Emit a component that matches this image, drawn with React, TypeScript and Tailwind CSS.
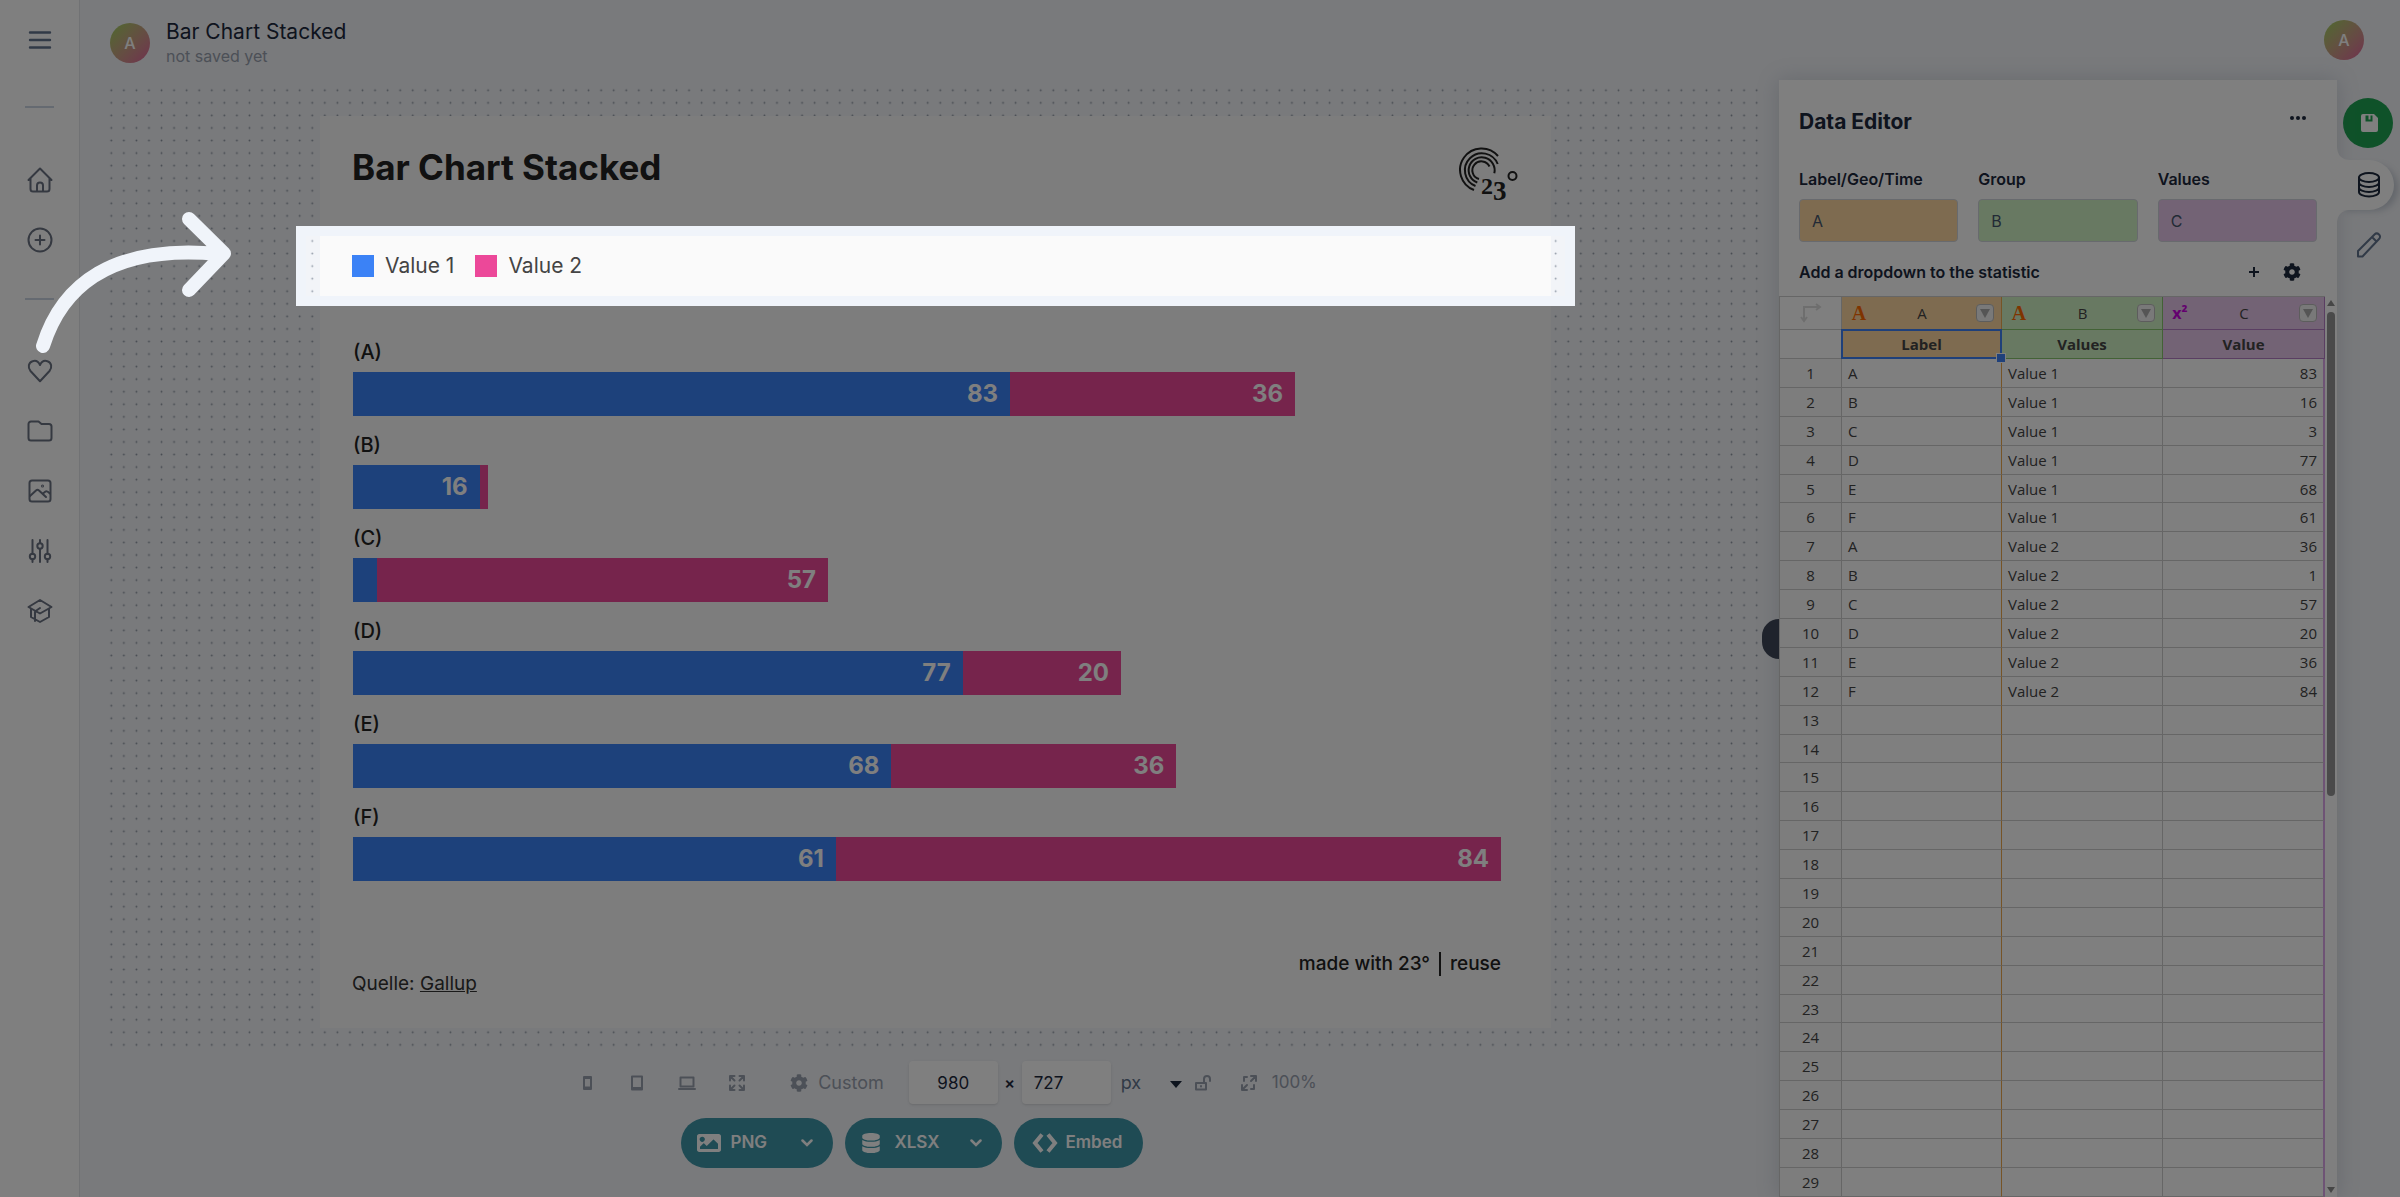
import { useState } from "react";
import type { ReactNode } from "react";
import { FaCog, FaDatabase, FaImage } from "react-icons/fa";

const series = [
  { name: "Value 1", fill: "bg-[#3b82f6]" },
  { name: "Value 2", fill: "bg-[#ec4899]" },
];

const bars = [
  { label: "A", values: [83, 36] },
  { label: "B", values: [16, 1] },
  { label: "C", values: [3, 57] },
  { label: "D", values: [77, 20] },
  { label: "E", values: [68, 36] },
  { label: "F", values: [61, 84] },
];

const rows = series.flatMap((s, i) =>
  bars.map((bar) => [bar.label, s.name, String(bar.values[i])])
);

const ROW_COUNT = 29;
const maxTotal = Math.max(...bars.map((b) => b.values[0] + b.values[1]));

export default function App() {
  return (
    <div className="relative flex h-screen overflow-hidden bg-[#f2f4f8] font-[Inter,sans-serif] text-slate-800">
      <Sidebar />
      <div className="flex min-w-0 flex-1 flex-col">
        <Header />
        <div className="flex min-h-0 flex-1">
          <main className="min-w-0 flex-1 pt-1">
            <Canvas />
            <Toolbar />
            <Downloads />
          </main>
          <DataEditor />
          <Rail />
        </div>
      </div>
      <PointerArrow />
    </div>
  );
}

function Icon({ children, size = 26 }: { children: ReactNode; size?: number }) {
  return (
    <svg
      width={size}
      height={size}
      viewBox="0 0 26 26"
      fill="none"
      stroke="currentColor"
      strokeWidth="2"
      strokeLinecap="round"
      strokeLinejoin="round"
      aria-hidden="true"
    >
      {children}
    </svg>
  );
}

function NavLink({ label, children }: { label: string; children: ReactNode }) {
  return (
    <a href="#" aria-label={label} className="flex h-[60px] items-center">
      <Icon>{children}</Icon>
    </a>
  );
}

function Sidebar() {
  return (
    <nav className="flex w-20 shrink-0 flex-col items-center border-r border-[#e3e5e9] bg-white text-gray-500">
      <button aria-label="Menu" className="flex h-20 items-center text-slate-500">
        <Icon>
          <path d="M3 5.5h20M3 13h20M3 20.5h20" strokeWidth="2.4" />
        </Icon>
      </button>
      <hr className="mt-[26px] w-[29px] border-t-2 border-slate-300" />
      <div className="mt-[42px]">
        <NavLink label="Home">
          <path d="M1.5 13 13 1.500 24.500 13M3.500 11.500V22a2.500 2.500 0 0 0 2.500 2.500h14a2.500 2.500 0 0 0 2.500-2.500V11.500M10 24v-5.500a3 3 0 0 1 6 0V24" />
        </NavLink>
        <NavLink label="Create">
          <circle cx="13" cy="13" r="11.500" />
          <path d="M13 8.500v9M8.500 13h9" />
        </NavLink>
      </div>
      <hr className="mt-7 w-[29px] border-t-2 border-slate-300" />
      <div className="mt-[41px]">
        <NavLink label="Favorites">
          <path d="M13 7C11 2.500 7.500 2.500 5.500 3.200 1.500 4.500.5 9.500 3.500 13L13 23.200 22.500 13c3-3.500 2-8.500-2-9.800C18.500 2.500 15 2.500 13 7Z" />
        </NavLink>
        <NavLink label="Folders">
          <path d="M1.500 6A2.500 2.500 0 0 1 4 3.500h7.500l3 2.500H22a2.500 2.500 0 0 1 2.500 2.500V20a2.500 2.500 0 0 1-2.500 2.500H4A2.500 2.500 0 0 1 1.500 20Z" />
        </NavLink>
        <NavLink label="Images">
          <rect x="2.500" y="2.500" width="21" height="21" rx="2.500" />
          <path d="m3 18 6-5.500c1-.9 2-.9 3 0l7 6.500M16 15.500l2.500-2c1-.8 2-.6 4.500 2" />
          <circle cx="15.500" cy="8" r=".5" />
        </NavLink>
        <NavLink label="Settings">
          <path d="M5.500 2v14M5.500 21v3M13 2v3M13 11v13M20.500 2v14M20.500 21v3" />
          <circle cx="5.500" cy="18.500" r="2.700" />
          <circle cx="13" cy="8" r="2.700" />
          <circle cx="20.500" cy="18.500" r="2.700" />
        </NavLink>
        <NavLink label="Academy">
          <path d="M13 2 1.500 9 13 15.500 24.500 9ZM4 11v8l9 5 9-5v-8M8 23v-9.500l5-3.500" />
        </NavLink>
      </div>
    </nav>
  );
}

function Avatar() {
  return (
    <span className="flex size-10 items-center justify-center rounded-full bg-linear-135 from-[#9bd25a] to-[#e0609c] text-base font-medium text-white">
      A
    </span>
  );
}

function Header() {
  return (
    <header className="flex h-20 shrink-0 items-center justify-between pr-9 pl-[30px]">
      <div className="flex items-center gap-4 pt-1.5">
        <Avatar />
        <div className="pt-0.5">
          <h1 className="text-[21px] leading-6">Bar Chart Stacked</h1>
          <p className="text-base leading-6 text-gray-400">not saved yet</p>
        </div>
      </div>
      <Avatar />
    </header>
  );
}

function Logo() {
  return (
    <svg width="62" height="60" viewBox="0 0 62 60" className="text-[#222]" fill="none" stroke="currentColor" strokeWidth="2" role="img" aria-label="23 degrees">
      <path d="M39 10A21.500 21.500 0 1 0 15 44" />
      <path d="M38.700 18A17 17 0 1 0 16.500 40" />
      <path d="M35.300 27.300A13 13 0 1 0 18.300 36.500" />
      <path d="M30.500 20.500A9 9 0 1 0 20 33" />
      <circle cx="53.500" cy="30" r="4" />
      <text x="22" y="48" fontSize="24" fontWeight="bold" fontFamily="Liberation Serif, serif" fill="currentColor" stroke="none">
        2
      </text>
      <text x="34" y="54" fontSize="27" fontWeight="bold" fontFamily="Liberation Serif, serif" fill="currentColor" stroke="none">
        3
      </text>
    </svg>
  );
}

function Canvas() {
  return (
    <div className="relative mr-3 ml-6 px-6 pt-8 pb-[25px]">
      <svg className="absolute inset-0 size-full" aria-hidden="true">
        <pattern id="dots" x="1" width="12.56" height="12.56" patternUnits="userSpaceOnUse">
          <circle cx="6.300" cy="6.300" r=".9" fill="#8d96a3" />
        </pattern>
        <rect width="100%" height="100%" fill="url(#dots)" />
      </svg>
      <article className="relative mx-auto w-full max-w-[1231px] bg-[#fafafa] pb-[30px] text-[#222]">
        <div className="flex h-[110px] justify-between pt-[30px] pr-[30px] pl-8">
          <h2 className="text-[35px] leading-[42px] font-bold">Bar Chart Stacked</h2>
          <Logo />
        </div>

        <div className="relative flex h-20 items-center pl-8 text-[21px] text-[#444]">
          {series.map((s) => (
            <div key={s.name} className="mr-[21px] flex items-center gap-[11px]">
              <span className={`size-[22px] ${s.fill}`} />
              {s.name}
            </div>
          ))}
          {/* spotlight: dims everything outside the legend */}
          <div className="pointer-events-none absolute inset-y-0 -right-6 -left-6 z-50 border-10 border-[#f0f4fa] shadow-[0_0_0_3000px_rgba(0,0,0,0.5)]" />
        </div>

        <div className="pt-[17px] pr-[50px] pl-[33px]">
          {bars.map((bar) => (
            <StackedBar key={bar.label} label={bar.label} values={bar.values} />
          ))}
        </div>

        <footer className="flex justify-between pt-[69px] pr-[50px] pl-8">
          <p className="pt-5 text-[19px] leading-7 text-[#333]">
            Quelle:{" "}
            <a href="#" className="underline">
              Gallup
            </a>
          </p>
          <p className="flex h-7 items-center gap-[9px] text-[19px] font-medium">
            made with 23° <span className="h-6 w-0.5 bg-[#222]" />
            <a href="#">reuse</a>
          </p>
        </footer>
      </article>
    </div>
  );
}

function StackedBar({ label, values }: { label: string; values: number[] }) {
  return (
    <div>
      <div className="flex h-[49px] items-end pb-1.5 text-xl leading-7 font-medium">
        ({label})
      </div>
      <div className="flex h-11">
        {values.map((value, i) => (
          <div
            key={series[i].name}
            className={`flex items-center justify-end overflow-hidden ${series[i].fill}`}
            style={{ width: `${(value / maxTotal) * 100}%` }}
          >
            {value > 5 && (
              <span className="pr-3 text-2xl font-bold text-white">{value}</span>
            )}
          </div>
        ))}
      </div>
    </div>
  );
}

function Toolbar() {
  const [width, setWidth] = useState("980");
  const [height, setHeight] = useState("727");

  return (
    <div className="flex h-[59px] items-center justify-center pt-2 pb-2 pl-8 text-lg text-gray-400">
      <div className="flex gap-6">
        <button aria-label="Phone">
          <Icon>
            <path d="M10 7h7v12h-7zM10 17.500h7M10 8h7" />
          </Icon>
        </button>
        <button aria-label="Tablet">
          <Icon>
            <path d="M8 6.500h10v13H8zM8 18h10" />
          </Icon>
        </button>
        <button aria-label="Laptop">
          <Icon>
            <path d="M6.500 7.500h13v9h-13zM5 19h16" />
          </Icon>
        </button>
        <button aria-label="Full screen">
          <Icon>
            <path d="M6 10.500V6h4.500M6 6l4.500 4.500M15.500 6H20v4.500M20 6l-4.500 4.500M6 15.500V20h4.500M6 20l4.500-4.500M15.500 20H20v-4.500M20 20l-4.500-4.500" />
          </Icon>
        </button>
      </div>
      <button className="ml-10 flex items-center gap-2.5">
        <FaCog className="size-[18px]" />
        Custom
      </button>
      <input
        aria-label="Width"
        value={width}
        onChange={(e) => setWidth(e.target.value)}
        className="ml-[25px] h-[43px] w-[89px] rounded-sm bg-white text-center text-[17px] text-slate-800 shadow-sm"
      />
      <span className="w-6 text-center text-base font-semibold text-slate-800">×</span>
      <input
        aria-label="Height"
        value={height}
        onChange={(e) => setHeight(e.target.value)}
        className="h-[43px] w-[89px] rounded-sm bg-white pl-3 text-[17px] text-slate-800 shadow-sm"
      />
      <div className="relative ml-2.5">
        <select aria-label="Unit" className="w-[61px] appearance-none text-slate-500">
          <option>px</option>
        </select>
        <svg width="12" height="7" className="pointer-events-none absolute top-3 right-0 text-slate-800" aria-hidden="true">
          <path d="M0 0h12L6 7z" fill="currentColor" />
        </svg>
      </div>
      <button aria-label="Unlock ratio" className="ml-2">
        <Icon>
          <path d="M6 13h10v6.500H6zM14 13V9a3 3 0 0 1 6 0v2M11 16v.5" />
        </Icon>
      </button>
      <button aria-label="Zoom" className="ml-5 flex items-center gap-2.5">
        <Icon>
          <path d="M15 6h5v5M20 6l-5 5M11 20H6v-5M6 20l5-5M8 11V7h3M18 15v4h-3" />
        </Icon>
        <span className="text-[17px]">100%</span>
      </button>
    </div>
  );
}

function Chevron() {
  return (
    <svg width="12" height="8" viewBox="0 0 12 8" fill="none" stroke="currentColor" strokeWidth="2.500" strokeLinecap="round" aria-hidden="true">
      <path d="M1.500 1.500 6 6l4.500-4.500" />
    </svg>
  );
}

function Downloads() {
  return (
    <div className="mt-1.5 flex justify-center gap-3 pr-9 text-[17px] font-semibold text-white">
      <button className="flex h-[50px] w-[152px] items-center rounded-full bg-[#3e96a8] px-4">
        <FaImage className="size-6" />
        <span className="ml-2.5 flex-1 text-left">PNG</span>
        <span className="pr-1">
          <Chevron />
        </span>
      </button>
      <button className="flex h-[50px] w-[157px] items-center rounded-full bg-[#3e96a8] px-4">
        <FaDatabase className="size-5" />
        <span className="ml-3.5 flex-1 text-left">XLSX</span>
        <span className="pr-1">
          <Chevron />
        </span>
      </button>
      <button className="flex h-[50px] w-[129px] items-center gap-2 rounded-full bg-[#3e96a8] pl-[18px]">
        <svg width="26" height="20" viewBox="0 0 26 20" fill="none" stroke="currentColor" strokeWidth="4" aria-hidden="true">
          <path d="m10 1.500-7 8.500 7 8.500M16 1.500l7 8.500-7 8.500" />
        </svg>
        Embed
      </button>
    </div>
  );
}

const fields = [
  { id: "label", title: "Label/Geo/Time", value: "A", fill: "bg-[#fcd7a1]" },
  { id: "group", title: "Group", value: "B", fill: "bg-[#d1f3c4]" },
  { id: "values", title: "Values", value: "C", fill: "bg-[#e6c6ea]" },
];

function DataEditor() {
  return (
    <aside className="relative flex w-[558px] shrink-0 flex-col bg-white shadow-[0_0_20px_rgba(100,116,139,0.25)]">
      <button
        aria-label="Collapse editor"
        className="absolute top-[539px] -left-[17px] h-10 w-[17px] rounded-l-full bg-[#3f4758]"
      />
      <div className="px-5 pt-[26px]">
        <div className="flex h-8 justify-between pr-2.5">
          <h2 className="text-[21px] leading-8 font-bold">Data Editor</h2>
          <button aria-label="More" className="flex h-6 items-center">
            <svg width="18" height="6" fill="currentColor" aria-hidden="true">
              <circle cx="3" cy="3" r="2" />
              <circle cx="9" cy="3" r="2" />
              <circle cx="15" cy="3" r="2" />
            </svg>
          </button>
        </div>
        <div className="mt-[29px] grid grid-cols-3 gap-5">
          {fields.map((field) => (
            <div key={field.id}>
              <label htmlFor={field.id} className="block text-base leading-6 font-semibold">
                {field.title}
              </label>
              <input
                id={field.id}
                defaultValue={field.value}
                className={`mt-2 h-[43px] w-full rounded-sm border border-gray-300 px-3 text-base text-slate-600 ${field.fill}`}
              />
            </div>
          ))}
        </div>
        <div className="mt-[18px] flex h-6 items-center">
          <h3 className="flex-1 text-base font-semibold">Add a dropdown to the statistic</h3>
          <button aria-label="Add dropdown">
            <svg width="10" height="10" stroke="currentColor" strokeWidth="2" aria-hidden="true">
              <path d="M5 0v10M0 5h10" />
            </svg>
          </button>
          <button aria-label="Dropdown settings" className="mr-4 ml-6">
            <FaCog className="size-[18px]" />
          </button>
        </div>
      </div>
      <div className="mt-3 flex min-h-0 flex-1">
        <div className="min-w-0 flex-1">
          <Sheet />
        </div>
        <ScrollTrack />
      </div>
    </aside>
  );
}

const columns = [
  { name: "A", title: "Label", kind: "A", cell: "bg-[#fcd7a1] border-[#eda84f]" },
  { name: "B", title: "Values", kind: "A", cell: "bg-[#d1f3c4] border-[#86c46c]" },
  { name: "C", title: "Value", kind: "x²", cell: "bg-[#e6c6ea] border-[#b47cc4]" },
];

function Sheet() {
  return (
    <table className="h-full w-full table-fixed border-separate border-spacing-0 border-t border-l border-[#ccc] font-['Open_Sans',sans-serif] text-[15px] leading-5 text-[#444]">
      <colgroup>
        <col className="w-[62px]" />
        <col className="w-40" />
        <col className="w-[161px]" />
        <col />
      </colgroup>
      <thead>
        <tr className="h-[33px]">
          <th className="border-r border-b border-[#ccc]">
            <svg width="22" height="20" className="mx-auto text-[#ddd]" fill="none" stroke="currentColor" strokeWidth="2" aria-hidden="true">
              <path d="M4 18V4h16M1 14l3 4 3-4M16 1l4 3-4 3" />
            </svg>
          </th>
          {columns.map((col) => (
            <th key={col.name} className={`border-r border-b p-0 font-normal ${col.cell}`}>
              <div className="flex items-center pr-[7px] pl-2">
                <span
                  className={
                    col.kind === "A"
                      ? "w-[18px] font-['Liberation_Serif',serif] text-xl font-bold text-orange-500"
                      : "w-[18px] text-base font-bold text-fuchsia-600"
                  }
                >
                  {col.kind}
                </span>
                <span className="flex-1 text-center">{col.name}</span>
                <button
                  aria-label={`Filter ${col.name}`}
                  className="flex size-[18px] items-center justify-center rounded-sm border border-[#bbb] bg-[#f2f2f2]"
                >
                  <svg width="10" height="9" className="text-[#aaa]" aria-hidden="true">
                    <path d="M0 0h10L5 9z" fill="currentColor" />
                  </svg>
                </button>
              </div>
            </th>
          ))}
        </tr>
        <tr className="h-[29px]">
          <th className="border-r border-b border-[#ccc]" />
          {columns.map((col, i) => (
            <th key={col.name} className={`relative border-r border-b p-0 font-bold ${col.cell}`}>
              {col.title}
              {i === 0 && (
                <span className="absolute -inset-px z-10 border-2 border-[#3f80f5]">
                  <span className="absolute -right-1.5 -bottom-1.5 size-2.5 border border-white bg-[#3f80f5]" />
                </span>
              )}
            </th>
          ))}
        </tr>
      </thead>
      <tbody>
        {Array.from({ length: ROW_COUNT }, (_, i) => {
          const row = rows[i] ?? ["", "", ""];
          return (
            <tr key={i} className="h-7">
              <th className="border-r border-b border-[#ccc] bg-[#fafafa] p-0 font-normal">
                {i + 1}
              </th>
              <td className="border-r border-b border-r-[#eda84f] border-b-[#ccc] px-1.5 py-0">{row[0]}</td>
              <td className="border-r border-b border-[#ccc] px-1.5 py-0">{row[1]}</td>
              <td className="border-r-2 border-b border-r-[#dca6ea] border-b-[#ccc] px-1.5 py-0 text-right">
                {row[2]}
              </td>
            </tr>
          );
        })}
      </tbody>
    </table>
  );
}

function ScrollTrack() {
  return (
    <div className="flex w-3 flex-col items-center pt-1 pb-1 text-[#8c8c8c]" aria-hidden="true">
      <svg width="8" height="6">
        <path d="M0 6h8L4 0z" fill="currentColor" />
      </svg>
      <div className="mt-1.5 h-[484px] w-2 rounded-full bg-[#949494]" />
      <svg width="8" height="6" className="mt-auto">
        <path d="M0 0h8L4 6z" fill="currentColor" />
      </svg>
    </div>
  );
}

function Rail() {
  return (
    <div className="flex w-[63px] shrink-0 flex-col pt-[18px]">
      <button
        aria-label="Save"
        className="ml-1.5 flex size-[50px] items-center justify-center rounded-full bg-[#1ea452] text-white"
      >
        <svg width="20" height="20" viewBox="0 0 20 20" aria-hidden="true" className="ml-1">
          <path fillRule="evenodd" fill="currentColor" d="M3 1h11l4 4v12a2 2 0 0 1-2 2H3a2 2 0 0 1-2-2V3a2 2 0 0 1 2-2Zm2.500 1.500v6h7v-6h-2v4h-2v-4Z" />
        </svg>
      </button>
      <div className="relative mt-3">
        {/* tab grows out of the panel with flared corners */}
        <svg width="14" height="78" className="absolute -top-3.5 left-0 text-white" fill="currentColor" aria-hidden="true">
          <path d="M0 0Q0 14 14 14V64Q0 64 0 78Z" />
        </svg>
        <button
          aria-label="Data"
          className="relative flex h-[50px] w-[57px] items-center justify-center rounded-r-full bg-white pl-1.5 text-slate-800 shadow-[6px_3px_6px_-2px_rgba(100,116,139,0.3)]"
        >
          <Icon>
            <ellipse cx="13" cy="5.500" rx="10" ry="4.500" />
            <path d="M3 5.500v14.500c0 2.500 4.500 4.500 10 4.500s10-2 10-4.500V5.500M3 10.500c0 2.500 4.500 4.500 10 4.500s10-2 10-4.500M3 15.500C3 18 7.500 20 13 20s10-2 10-4.500" />
          </Icon>
        </button>
      </div>
      <button aria-label="Design" className="mt-[22px] flex justify-center text-slate-500">
        <Icon>
          <path d="M2 24.500V19L18.500 2.500c1.500-1.500 3.200-1.200 4.500 0s1.500 3 0 4.500L6.500 24.500ZM16 5l4.500 4.500" />
        </Icon>
      </button>
    </div>
  );
}

function PointerArrow() {
  return (
    <svg
      width="200"
      height="150"
      viewBox="0 0 200 150"
      fill="none"
      strokeWidth="14"
      strokeLinecap="round"
      strokeLinejoin="round"
      stroke="currentColor"
      className="pointer-events-none absolute top-[205px] left-[35px] z-50 text-[#f0f4fa]"
      aria-hidden="true"
    >
      <path d="M8 141C27 80 78 39 184 49M154 14l35 34.500-35 36.500" />
    </svg>
  );
}
